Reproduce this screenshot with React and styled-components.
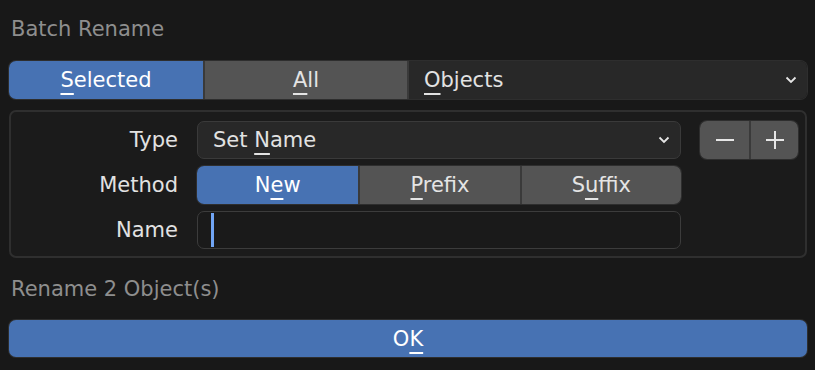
import React from "react";
import styled, { createGlobalStyle } from "styled-components";

const GlobalStyle = createGlobalStyle`
    body {
        margin: 0;
        background: #181818;
        font-family: "DejaVu Sans", "Liberation Sans", sans-serif;
    }
`;

const Page = styled.div`
    width: 815px;
    height: 370px;
    box-sizing: border-box;
    padding: 16px 8px 0 9px;
    background: #181818;
    font-size: 21px;
`;

const Caption = styled.div`
    line-height: 26px;
    height: 26px;
    padding-left: 2px;
    color: #8e8e8e;
    margin-bottom: ${(p) => p.$after || 0}px;
`;

const Group = styled.div`
    display: grid;
    grid-template-columns: ${(p) => p.$cols};
    height: ${(p) => p.$h || 38}px;
    border-radius: 7px;
    box-shadow: 0 0 0 1px #2e2e2e;
    overflow: hidden;
`;

const Seg = styled.div`
    display: flex;
    align-items: center;
    justify-content: center;
    background: ${(p) => (p.$active ? "#4772b3" : "#545454")};
    color: ${(p) => (p.$active ? "#ffffff" : "#e4e4e4")};
    border-left: ${(p) => (p.$first ? "none" : "2px solid #3a3a3a")};
    white-space: nowrap;
`;

const Drop = styled.div`
    display: flex;
    align-items: center;
    justify-content: space-between;
    padding: 0 10px 0 15px;
    background: #282828;
    color: #e2e2e2;
    border-left: ${(p) => (p.$joined ? "2px solid #3a3a3a" : "none")};
    border: ${(p) => (p.$joined ? undefined : "1px solid #3a3a3a")};
    border-radius: ${(p) => (p.$joined ? 0 : 7)}px;
    height: 38px;
    box-sizing: border-box;
`;

const Key = styled.span`
    text-decoration: underline;
    text-decoration-thickness: 2px;
    text-underline-offset: 6px;
`;

const Panel = styled.div`
    margin-top: 11px;
    border: 2px solid #2f2f2f;
    border-radius: 7px;
    background: #1b1b1b;
    padding: 9px 10px 7px 0;
    display: grid;
    grid-template-columns: 167px 484px 98px;
    column-gap: 19px;
    row-gap: 7px;
    grid-auto-rows: 38px;
    margin-bottom: 18px;
`;

const Label = styled.div`
    display: flex;
    align-items: center;
    justify-content: flex-end;
    color: #e2e2e2;
`;

const Field = styled.div`
    display: flex;
    align-items: center;
    padding-left: 13px;
    border: 1px solid #3c3c3c;
    border-radius: 7px;
    background: #1a1a1a;
`;

const Caret = styled.span`
    width: 3px;
    height: 34px;
    background: #71a5f5;
`;

const OkButton = styled.div`
    margin-top: 18px;
    height: 37px;
    display: flex;
    align-items: center;
    justify-content: center;
    background: #4772b3;
    color: #ffffff;
    border-radius: 7px;
    box-shadow: 0 0 0 1px #2e2e2e;
`;

const Chevron = () => (
    <svg width="12" height="8" viewBox="0 0 12 8">
        <path d="M1.5 1.5 L6 6 L10.5 1.5" fill="none" stroke="#e6e6e6" strokeWidth="1.8" />
    </svg>
);

const Sign = ({ plus }) => (
    <svg width="20" height="20" viewBox="0 0 20 20">
        <path d="M1 10 H19" stroke="#e6e6e6" strokeWidth="2" />
        {plus && <path d="M10 1 V19" stroke="#e6e6e6" strokeWidth="2" />}
    </svg>
);

export default function App() {
    return (
        <>
            <GlobalStyle />
            <Page>
                <Caption $after={19}>Batch Rename</Caption>
                <Group $cols="194px 204px 1fr">
                    <Seg $active $first>
                        <span>
                            <Key>S</Key>elected
                        </span>
                    </Seg>
                    <Seg>
                        <span>
                            <Key>A</Key>ll
                        </span>
                    </Seg>
                    <Drop $joined>
                        <span>
                            <Key>O</Key>bjects
                        </span>
                        <Chevron />
                    </Drop>
                </Group>
                <Panel>
                    <Label>Type</Label>
                    <Drop>
                        <span>
                            Set <Key>N</Key>ame
                        </span>
                        <Chevron />
                    </Drop>
                    <Group $cols="1fr 1fr">
                        <Seg $first>
                            <Sign />
                        </Seg>
                        <Seg>
                            <Sign plus />
                        </Seg>
                    </Group>

                    <Label>Method</Label>
                    <Group $cols="1fr 1fr 1fr">
                        <Seg $active $first>
                            <span>
                                N<Key>e</Key>w
                            </span>
                        </Seg>
                        <Seg>
                            <span>
                                <Key>P</Key>refix
                            </span>
                        </Seg>
                        <Seg>
                            <span>
                                S<Key>u</Key>ffix
                            </span>
                        </Seg>
                    </Group>
                    <div />

                    <Label>Name</Label>
                    <Field>
                        <Caret />
                    </Field>
                    <div />
                </Panel>
                <Caption>Rename 2 Object(s)</Caption>
                <OkButton>
                    <span>
                        O<Key>K</Key>
                    </span>
                </OkButton>
            </Page>
        </>
    );
}
